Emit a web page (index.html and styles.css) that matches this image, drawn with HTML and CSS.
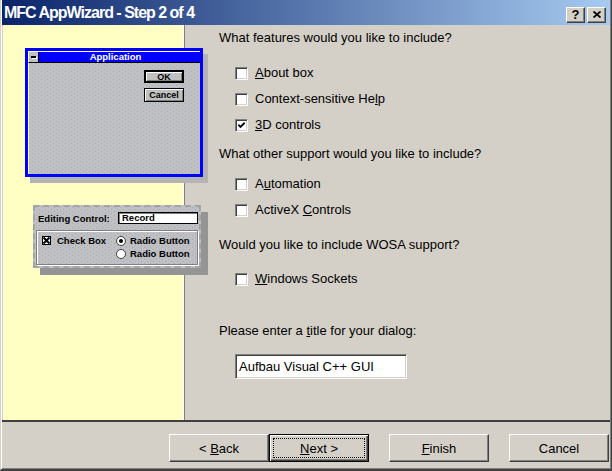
FILE: index.html
```html
<!DOCTYPE html>
<html lang="en">
<head>
    <meta charset="UTF-8">
    <title>MFC AppWizard - Step 2 of 4</title>
    <link rel="stylesheet" href="styles.css">
</head>
<body>
<div class="window">
    <div class="titlebar">
        <span class="title">MFC AppWizard - Step 2 of 4</span>
        <div class="caption-btns">
            <span class="cap-btn">?</span>
            <span class="cap-btn">
                <svg width="8" height="7" viewBox="0 0 8 7"><path d="M0.5 0.5 L7.5 6.5 M7.5 0.5 L0.5 6.5" stroke="#000" stroke-width="1.8" fill="none"/></svg>
            </span>
        </div>
    </div>

    <div class="main">
        <div class="art">
            <div class="app">
                <div class="app-title">
                    <span class="sysbox"><span class="dash"></span></span>
                    <span class="app-name">Application</span>
                </div>
                <div class="app-body">
                    <span class="w31-btn default">OK</span>
                    <span class="w31-btn">Cancel</span>
                </div>
            </div>

            <div class="ctl-panel">
                <div class="edit-row">
                    <span>Editing Control:</span>
                    <span class="edit-box">Record</span>
                </div>
                <div class="ctl-group">
                    <div class="ctl-check">
                        <span class="x-box">
                            <svg width="7" height="7" viewBox="0 0 7 7"><path d="M0.5 0.5 L6.5 6.5 M6.5 0.5 L0.5 6.5" stroke="#000" stroke-width="2" fill="none"/></svg>
                        </span>
                        <span>Check Box</span>
                    </div>
                    <div class="ctl-radios">
                        <div class="radio-row"><span class="radio on"></span><span>Radio Button</span></div>
                        <div class="radio-row"><span class="radio"></span><span>Radio Button</span></div>
                    </div>
                </div>
            </div>
        </div>

        <div class="content">
            <p class="question">What features would you like to include?</p>
            <div class="options first">
                <div class="opt"><span class="cb"></span><label><u>A</u>bout box</label></div>
                <div class="opt"><span class="cb"></span><label>Context-sensitive He<u>l</u>p</label></div>
                <div class="opt"><span class="cb"><svg width="7" height="7" viewBox="0 0 7 7"><path d="M0.3 2.6 L2.5 4.9 L6.7 0.7" stroke="#000" stroke-width="1.9" fill="none"/></svg></span><label><u>3</u>D controls</label></div>
            </div>

            <p class="question q2">What other support would you like to include?</p>
            <div class="options second">
                <div class="opt"><span class="cb"></span><label>A<u>u</u>tomation</label></div>
                <div class="opt"><span class="cb"></span><label>ActiveX <u>C</u>ontrols</label></div>
            </div>

            <p class="question q3">Would you like to include WOSA support?</p>
            <div class="options third">
                <div class="opt"><span class="cb"></span><label><u>W</u>indows Sockets</label></div>
            </div>

            <p class="question q4">Please enter a <u>t</u>itle for your dialog:</p>
            <input class="title-input" type="text" value="Aufbau Visual C++ GUI">
        </div>
    </div>

    <div class="footer">
        <button class="btn"><span>&lt; <u>B</u>ack</span></button>
        <button class="btn focus"><span class="focus-rect"><span><u>N</u>ext &gt;</span></span></button>
        <button class="btn spaced"><span><u>F</u>inish</span></button>
        <button class="btn spaced"><span>Cancel</span></button>
    </div>
</div>
</body>
</html>
```

FILE: styles.css
```css
*{box-sizing: border-box;}

body{
    margin: 0;
    font-family: "Liberation Sans", Arial, sans-serif;
    font-size: 13px;
    color: #000;
}

.window{
    width: 612px;
    height: 471px;
    display: flex;
    flex-direction: column;
    background-color: #d4d0c8;
    border-left: 1px solid #d4d0c8;
    border-right: 1px solid #404040;
    border-bottom: 2px solid #404040;
    padding: 0 1px 0 1px;
    box-shadow: inset 1px 0 #fff, inset -1px -1px #808080;
}

/* title bar */
.titlebar{
    height: 25px;
    flex: none;
    display: flex;
    align-items: center;
    background: linear-gradient(to right, #0a246a, #a6caf0);
    padding: 0 4px 0 2px;
}
.title{
    color: #fff;
    font-weight: bold;
    font-size: 16px;
    line-height: 18px;
    letter-spacing: -1px;
    flex: 1;
}
.caption-btns{
    display: flex;
    gap: 2px;
    margin-top: 4px;
}
.cap-btn{
    width: 19px;
    height: 16px;
    display: flex;
    align-items: center;
    justify-content: center;
    background-color: #d4d0c8;
    border: 1px solid;
    border-color: #fff #404040 #404040 #fff;
    box-shadow: inset -1px -1px #808080;
    font-weight: bold;
    font-size: 13px;
    line-height: 13px;
}

.main{
    height: 395px;
    flex: none;
    display: flex;
}

/* left picture */
.art{
    width: 182px;
    margin-left: 1px;
    flex: none;
    border-right: 1px solid #808080;
    box-shadow: inset -1px 0 #fff;
    background-color: #ffffc4;
    position: relative;
    z-index: 1;
    padding-top: 23px;
}

.app{
    width: 178px;
    height: 129px;
    margin-left: 22px;
    border: 3px solid #0000ff;
    background-color: #c0c0c0;
    background-image: url("data:image/svg+xml,%3Csvg xmlns='http://www.w3.org/2000/svg' width='6' height='4'%3E%3Crect x='1' y='0' width='1' height='1' fill='%239aa8d4'/%3E%3Crect x='4' y='2' width='1' height='1' fill='%239aa8d4'/%3E%3C/svg%3E");
    box-shadow: 5px 6px 0 #b4b4b4;
    display: flex;
    flex-direction: column;
}
.app-title{
    height: 12px;
    display: flex;
    background-color: #0000ff;
    border-top: 1px solid #fff;
    border-left: 1px solid #fff;
    border-bottom: 1px solid #000;
}
.sysbox{
    width: 10px;
    background-color: #c0c0c0;
    border-right: 1px solid #000;
    display: flex;
    align-items: center;
    justify-content: center;
}
.dash{
    width: 5px;
    height: 2px;
    background-color: #000;
    box-shadow: 1px 1px #fff;
}
.app-name{
    flex: 1;
    text-align: center;
    color: #fff;
    font-weight: bold;
    font-size: 9.5px;
    line-height: 10px;
    padding-right: 8px;
}
.app-body{
    flex: 1;
    display: flex;
    flex-direction: column;
    align-items: flex-end;
    gap: 5px;
    padding: 7px 16px 0 0;
    border-left: 1px solid #fff;
}
.w31-btn{
    width: 40px;
    height: 14px;
    display: flex;
    align-items: center;
    justify-content: center;
    background-color: #c0c0c0;
    border: 1px solid #000;
    box-shadow: inset 1px 1px #fff, inset -1px -1px #808080;
    font-weight: bold;
    font-size: 9px;
}
.w31-btn.default{
    height: 13px;
    border-width: 2px;
}

.ctl-panel{
    width: 168px;
    height: 63px;
    margin: 28px 0 0 30px;
    background-color: #c0c0c0;
    background-image: url("data:image/svg+xml,%3Csvg xmlns='http://www.w3.org/2000/svg' width='6' height='4'%3E%3Crect x='1' y='0' width='1' height='1' fill='%239aa8d4'/%3E%3Crect x='4' y='2' width='1' height='1' fill='%239aa8d4'/%3E%3C/svg%3E");
    border: 2px dashed #a4a4a4;
    box-shadow: 7px 7px 0 #949494;
    padding: 5px 1px 0 3px;
    font-weight: bold;
    font-size: 9.5px;
}
.edit-row{
    display: flex;
    align-items: center;
    height: 12px;
}
.edit-box{
    margin-left: auto;
    width: 80px;
    height: 12px;
    background-color: #fff;
    border: 1px solid #000;
    box-shadow: inset 1px 1px #808080;
    padding-left: 3px;
    line-height: 10px;
}
.ctl-group{
    margin: 6px 0 0 -2px;
    height: 35px;
    border: 1px solid #808080;
    box-shadow: 1px 1px #fff, inset 1px 1px #fff;
    display: flex;
    padding: 5px 0 0 5px;
}
.ctl-check{
    width: 74px;
    display: flex;
    align-items: flex-start;
    gap: 6px;
    line-height: 10px;
}
.x-box{
    width: 9px;
    height: 9px;
    display: flex;
    background-color: #fff;
    border: 1px solid #000;
}
.ctl-radios{
    display: flex;
    flex-direction: column;
    gap: 3px;
}
.radio-row{
    display: flex;
    align-items: center;
    gap: 4px;
    line-height: 10px;
}
.radio{
    width: 10px;
    height: 10px;
    border-radius: 50%;
    background-color: #fff;
    border: 1px solid #404040;
    display: flex;
    align-items: center;
    justify-content: center;
}
.radio.on::after{
    content: "";
    width: 4px;
    height: 4px;
    border-radius: 50%;
    background-color: #000;
}

/* right side */
.content{
    flex: 1;
    padding: 5px 0 0 34px;
}
.question{
    margin: 0;
    line-height: 15px;
}
.q2{ margin-top: 14px; }
.q3{ margin-top: 20px; }
.q4{ margin-top: 37px; }

.options{
    display: flex;
    flex-direction: column;
    gap: 13px;
    padding-left: 16px;
}
.options.first{ margin-top: 22px; }
.options.second{ margin-top: 17px; }
.options.third{ margin-top: 21px; }

.opt{
    display: flex;
    align-items: flex-start;
    height: 13px;
}
.opt label{
    margin: -1px 0 0 7px;
    line-height: 13px;
}
.cb{
    width: 13px;
    height: 13px;
    flex: none;
    background-color: #fff;
    border: 1px solid;
    border-color: #808080 #fff #fff #808080;
    box-shadow: inset 1px 1px #404040, inset -1px -1px #d4d0c8;
    display: flex;
    align-items: center;
    justify-content: center;
}

.title-input{
    display: block;
    margin: 16px 0 0 16px;
    width: 172px;
    height: 25px;
    padding: 0 3px;
    font-family: inherit;
    font-size: 13px;
    background-color: #fff;
    border: 1px solid;
    border-color: #808080 #fff #fff #808080;
    box-shadow: inset 1px 1px #404040, inset -1px -1px #d4d0c8;
    outline: none;
}

/* bottom buttons */
.footer{
    height: 49px;
    flex: none;
    border-top: 2px solid #404040;
    display: flex;
    justify-content: flex-end;
    align-items: flex-start;
    padding: 12px 1px 0 0;
}
.btn{
    width: 100px;
    height: 28px;
    font-family: inherit;
    font-size: 13px;
    color: #000;
    background-color: #d4d0c8;
    border: 1px solid;
    border-color: #fff #404040 #404040 #fff;
    box-shadow: inset -1px -1px #808080;
    padding: 0;
    display: flex;
    align-items: center;
    justify-content: center;
}
.btn.spaced{
    margin-left: 20px;
}
.btn.focus{
    border: 1px solid #000;
    box-shadow: inset 1px 1px #fff, inset -1px -1px #404040, inset -2px -2px #808080;
    padding: 3px;
}
.focus-rect{
    width: 100%;
    height: 100%;
    border: 1px dotted #000;
    display: flex;
    align-items: center;
    justify-content: center;
}
```
